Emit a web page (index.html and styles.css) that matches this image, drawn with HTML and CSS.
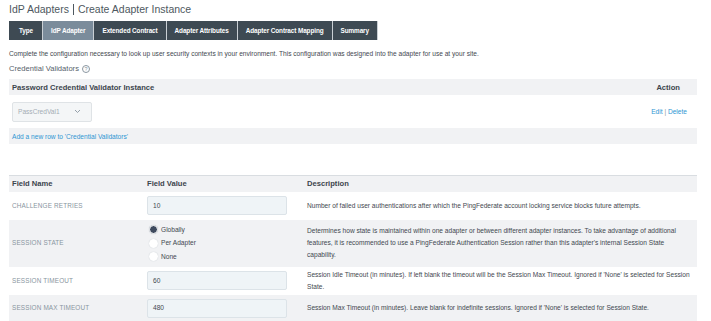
FILE: index.html
```html
<!DOCTYPE html>
<html lang="en">
<head>
  <meta charset="UTF-8" />
  <title>IdP Adapters | Create Adapter Instance</title>
  <link rel="stylesheet" href="styles.css">
</head>
<body>
  <div class="page">
    <h1 class="title">IdP Adapters <span class="sep"></span> Create Adapter Instance</h1>

    <div class="tabs">
      <div class="tab">Type</div>
      <div class="tab active">IdP Adapter</div>
      <div class="tab">Extended Contract</div>
      <div class="tab">Adapter Attributes</div>
      <div class="tab">Adapter Contract Mapping</div>
      <div class="tab">Summary</div>
    </div>

    <p class="intro">Complete the configuration necessary to look up user security contexts in your environment. This configuration was designed into the adapter for use at your site.</p>
    <div class="section-label">Credential Validators <span class="help">?</span></div>

    <div class="validators">
      <div class="val-head">
        <span>Password Credential Validator Instance</span>
        <span class="action-head">Action</span>
      </div>
      <div class="val-row">
        <div class="select">
          <span>PassCredVal1</span>
          <svg width="7" height="5" viewBox="0 0 7 5"><path d="M1 1 L3.5 3.5 L6 1" fill="none" stroke="#8a96a0" stroke-width="0.9"/></svg>
        </div>
        <div class="actions"><a>Edit</a> <span class="bar">|</span> <a>Delete</a></div>
      </div>
      <div class="add-row"><a>Add a new row to 'Credential Validators'</a></div>
    </div>

    <table class="fields">
      <thead>
        <tr>
          <th class="c-name">Field Name</th>
          <th class="c-value">Field Value</th>
          <th>Description</th>
        </tr>
      </thead>
      <tbody>
        <tr class="r1">
          <td class="fname">CHALLENGE RETRIES</td>
          <td><div class="input">10</div></td>
          <td>Number of failed user authentications after which the PingFederate account locking service blocks future attempts.</td>
        </tr>
        <tr class="alt r2">
          <td class="fname">SESSION STATE</td>
          <td>
            <div class="radio checked">Globally</div>
            <div class="radio">Per Adapter</div>
            <div class="radio">None</div>
          </td>
          <td>Determines how state is maintained within one adapter or between different adapter instances. To take advantage of additional features, it is recommended to use a PingFederate Authentication Session rather than this adapter's internal Session State capability.</td>
        </tr>
        <tr class="r3">
          <td class="fname">SESSION TIMEOUT</td>
          <td><div class="input">60</div></td>
          <td>Session Idle Timeout (in minutes). If left blank the timeout will be the Session Max Timeout. Ignored if 'None' is selected for Session State.</td>
        </tr>
        <tr class="alt r4">
          <td class="fname">SESSION MAX TIMEOUT</td>
          <td><div class="input">480</div></td>
          <td>Session Max Timeout (in minutes). Leave blank for indefinite sessions. Ignored if 'None' is selected for Session State.</td>
        </tr>
      </tbody>
    </table>
  </div>
</body>
</html>
```

FILE: styles.css
```css
* {
  margin: 0;
  padding: 0;
  box-sizing: border-box;
}

html, body {
  background: #fff;
  font-family: "Liberation Sans", Arial, sans-serif;
  color: #3f4850;
  overflow: hidden;
}

.page {
  padding: 2px 14px 0 9px;
}

.title {
  font-size: 10.5px;
  line-height: 14px;
  font-weight: normal;
  color: #4e5860;
  display: flex;
  align-items: center;
}

.title .sep {
  display: inline-block;
  width: 1px;
  height: 11px;
  background: #4e5860;
  margin: 0 4px;
}

/* wizard tabs */
.tabs {
  display: flex;
  margin-top: 5px;
  height: 19px;
}

.tab {
  background: #3e4a53;
  color: #fff;
  font-size: 6.4px;
  font-weight: bold;
  padding: 0 8px;
  display: flex;
  align-items: center;
  border-right: 1px solid #c9cfd4;
  letter-spacing: -0.1px;
}

.tab:first-child {
  padding: 0 9px 0 10px;
}

.tab.active {
  background: #7b8c9b;
}

.intro {
  font-size: 6.6px;
  line-height: 8px;
  margin-top: 10px;
  color: #3f4850;
}

.section-label {
  font-size: 7.6px;
  line-height: 10px;
  margin-top: 6px;
  color: #56606a;
  display: flex;
  align-items: center;
}

.help {
  display: inline-flex;
  align-items: center;
  justify-content: center;
  width: 8px;
  height: 8px;
  border: 0.8px solid #8a96a0;
  border-radius: 50%;
  font-size: 5.5px;
  color: #8a96a0;
  margin-left: 3px;
}

/* credential validators */
.validators {
  margin-top: 5px;
  width: 688px;
}

.val-head {
  background: #f1f2f4;
  height: 16px;
  display: flex;
  align-items: center;
  justify-content: space-between;
  padding: 0 17px 0 3px;
  font-size: 7.6px;
  font-weight: bold;
  color: #3c454d;
}

.val-row {
  height: 33px;
  display: flex;
  align-items: center;
  justify-content: space-between;
  padding: 0 10px 0 3px;
}

.select {
  width: 80px;
  height: 20px;
  border: 1px solid #dfe3e6;
  border-radius: 2px;
  background: #f4f6f7;
  display: flex;
  align-items: center;
  justify-content: space-between;
  padding: 0 10px 0 5px;
  font-size: 6.6px;
  color: #a4adb4;
}

.actions {
  font-size: 6.6px;
  color: #2e96d3;
}

.actions .bar {
  color: #8a96a0;
}

.add-row {
  background: #f1f2f4;
  height: 16px;
  display: flex;
  align-items: center;
  padding-left: 3px;
  font-size: 6.6px;
  color: #2e96d3;
}

/* field table */
.fields {
  margin-top: 31px;
  width: 688px;
  border-collapse: collapse;
  border-top: 1px solid #d9dde1;
  font-size: 6.6px;
  line-height: 12px;
}

.fields th {
  background: #f1f2f4;
  height: 16px;
  text-align: left;
  font-size: 7.6px;
  color: #3c454d;
  padding: 0 3px;
}

.fields td {
  padding: 0 3px;
  vertical-align: middle;
  color: #3f4850;
}

.fields .c-name {
  width: 135px;
}

.fields .c-value {
  width: 160px;
}

.fields tr.alt td {
  background: #f1f2f4;
}

.r1 { height: 28px; }
.r2 { height: 47px; }
.r3 { height: 28px; }
.r4 { height: 27px; }

.fields td.fname {
  color: #8995a0;
  font-size: 6.4px;
  letter-spacing: 0.15px;
}

.input {
  width: 140px;
  height: 19px;
  background: #eff4f7;
  border: 1px solid #dce3e8;
  border-radius: 2px;
  display: flex;
  align-items: center;
  padding-left: 5px;
  color: #3f4850;
}

.radio {
  display: flex;
  align-items: center;
  height: 13.5px;
  padding-left: 2px;
}

.radio::before {
  content: "";
  width: 9px;
  height: 9px;
  border-radius: 50%;
  background: #fff;
  box-shadow: 0 0 1px #b8c0c6;
  margin-right: 3px;
  box-sizing: border-box;
}

.radio.checked::before {
  background: #3e4a5e;
  border: 1.5px solid #fff;
}
```
